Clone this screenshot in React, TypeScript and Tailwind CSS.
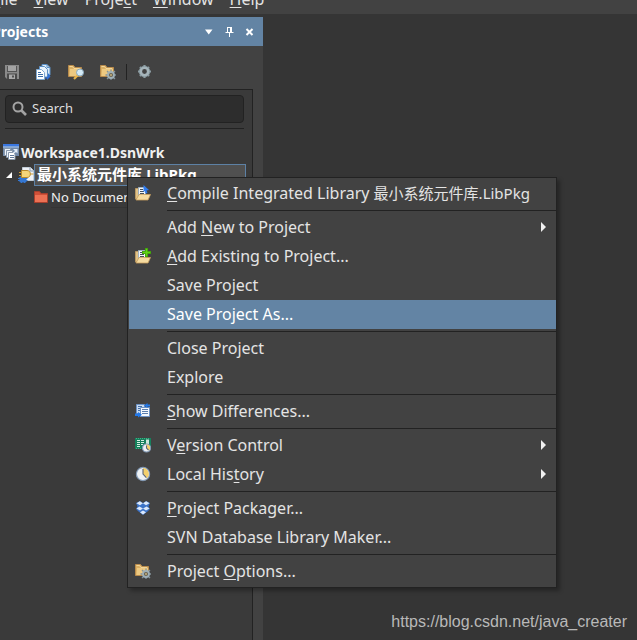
import type { ReactNode } from 'react';

type IconProps = { children: ReactNode; className?: string };

function Icon({ children, className = 'size-4 shrink-0' }: IconProps) {
  return (
    <svg viewBox="0 0 16 16" className={className} fill="none" aria-hidden="true">
      {children}
    </svg>
  );
}

function GearIcon() {
  return (
    <Icon>
      <path d="M7.500 1v13M1 7.500h13M3 3l9 9M12 3l-9 9" stroke="#8d9da3" strokeWidth="2.2" />
      <circle cx="7.500" cy="7.500" r="3.900" fill="#424242" stroke="#a5b4ba" strokeWidth="3" />
      <circle cx="7.500" cy="7.500" r="5.300" stroke="#81939b" strokeWidth="0.7" />
    </Icon>
  );
}

function SaveIcon() {
  return (
    <Icon>
      <path d="M1 1h14v14H3l-2-2z" fill="#8a8a8a" />
      <path d="M3 2h10v6H3z" fill="#555" />
      <path d="M4 2h8v5H4z" fill="#a3a3a3" />
      <path d="M3 9.500h10V15H3z" fill="#4b4b4b" />
      <path d="M5 10.500h6V15H5z" fill="#a9a9a9" />
      <path d="M8 11.500h2v2H8z" fill="#505050" />
    </Icon>
  );
}

function DocumentsIcon() {
  return (
    <Icon>
      <path d="M6 .5h5l3 3V11H6z" fill="#dcebf8" stroke="#5b8fc4" />
      <path d="M11 .5v3h3" stroke="#5b8fc4" />
      <path d="M3.500 2.500h5l3 3V13h-8z" fill="#e8f2fb" stroke="#5b8fc4" />
      <path d="M.5 5.500h5l3 3v7h-8z" fill="#fff" stroke="#7fa8d0" />
      <path d="M2 8.500h3M2 10.500h5M2 12.500h5" stroke="#3d6ea8" />
      <path d="M9 14.500h2V16l3.500-3.500L12 9v2.500c0 1.500-1 2-3 2z" fill="#2f6ed6" />
    </Icon>
  );
}

function FolderBase() {
  return (
    <>
      <path d="M.5 1.500h5l1.500 2h6.500v9H.5z" fill="#d9ae62" stroke="#b88b4c" />
      <path d="M2 5h11v7H1.500z" fill="#edc981" />
      <path d="M1.500 2.500h3l1.500 2h6" stroke="#f7e0a8" strokeWidth="0.8" />
    </>
  );
}

function FolderSearchIcon() {
  return (
    <Icon>
      <FolderBase />
      <path d="M10 11l-4 4" stroke="#e9b54b" strokeWidth="2.2" />
      <circle cx="12" cy="8.500" r="3.500" fill="#d4eaf6" stroke="#8ba9bc" />
    </Icon>
  );
}

function FolderGearIcon() {
  return (
    <Icon>
      <FolderBase />
      <path d="M11 5.500v10.500M5.500 11H16.500M7 7l8 8M15 7l-8 8" stroke="#83939a" strokeWidth="1.3" />
      <circle cx="11" cy="11" r="3" fill="#6b6350" stroke="#9fb0b8" strokeWidth="1.8" />
      <circle cx="11" cy="11" r="1" fill="#c6b27e" />
    </Icon>
  );
}

function OpenFolderBase() {
  return (
    <>
      <path d="M.5 3.500H4V14H.5z" fill="#e0c288" stroke="#b99862" />
      <path d="M3.500 2.500h6l1 1V11h-7z" fill="#f2f6fa" stroke="#9fb0c0" />
      <path d="M5 4.500h3M5 6.500h4M5 8.500h4" stroke="#45505c" />
      <path d="M1 15l3-5.500h11.500L13 15z" fill="#f5dba0" stroke="#c99f5d" strokeWidth="0.8" />
    </>
  );
}

function CompileIcon() {
  return (
    <Icon>
      <OpenFolderBase />
      <path d="M8.500 0L14 5l-2.500.5 1 2.500-2 .5-.5-2.500L8.500 7z" fill="#2f7cf0" />
    </Icon>
  );
}

function AddExistingIcon() {
  return (
    <Icon>
      <OpenFolderBase />
      <path d="M11.500 0v9M7 4.500h9" stroke="#3f9c0c" strokeWidth="3" />
      <path d="M11.500 .8v7.400M7.800 4.500h7.400" stroke="#62d417" strokeWidth="1.500" />
    </Icon>
  );
}

function DifferencesIcon() {
  return (
    <Icon>
      <path d="M1.500 1.500h8v9h-8z" fill="#c9dbf0" stroke="#6e93c4" />
      <path d="M3 3.500h4M3 5.500h3M3 7.500h3" stroke="#4670a8" />
      <path d="M5.500 4.500h9v9h-9z" fill="#f4f8fc" stroke="#6e93c4" />
      <path d="M7 6.500h6M7 8.500h6M7 10.500h6" stroke="#5b7eae" />
      <path d="M15 3.500h-2.500V5L9 2.500 12.500 0v1.500H15zM0 10.500h3V9l4 2.700L3 14.500V13H0z" fill="#2278e8" />
    </Icon>
  );
}

function ClockFace({ cx, cy, r }: { cx: number; cy: number; r: number }) {
  return (
    <>
      <circle cx={cx} cy={cy} r={r} fill="#eef2f5" stroke="#8299b5" strokeWidth="1.2" />
      <path
        d={`M${cx} ${cy}V${cy - r + 0.6}A${r - 0.6} ${r - 0.6} 0 0 1 ${cx + r * 0.6} ${cy + r * 0.65}z`}
        fill="#f3cf6b"
      />
      <path d={`M${cx} ${cy - r + 1.5}V${cy}l${r * 0.5} ${r * 0.55}`} stroke="#596579" strokeWidth="1.1" />
    </>
  );
}

function VersionIcon() {
  return (
    <Icon>
      <path d="M0 1h16v11H0z" fill="#16805c" />
      <path d="M1 1.500h14M1 11.500h8" stroke="#3fae84" strokeDasharray="1 1" />
      <path d="M2 3.500h3M2 5.500h3M2 7.500h3M2 9.500h3M6 3.500h3M6 5.500h3M6 7.500h2" stroke="#d8f0e5" />
      <path d="M11 2.500h3V7h-3z" fill="#cfe8dc" />
      <ClockFace cx={11.5} cy={11} r={4} />
    </Icon>
  );
}

function HistoryIcon() {
  return (
    <Icon>
      <ClockFace cx={8} cy={8} r={6.6} />
    </Icon>
  );
}

function PackagerIcon() {
  return (
    <Icon>
      <path d="M1 3l4-2 3 2 3-2 4 2-1.500 3.500L15 9l-2.500 2.500L8 15l-4.500-3.500L1 9l1.500-2.500z" fill="#3b73c8" />
      <path
        d="M4.800 1.200L8 3.200 5 5.200 1.500 3.200zM11.200 1.200L8 3.200l3 2 3.500-2zM4.500 6.500L8 8.500 5 10.500 1.500 8.500zM11.500 6.500L8 8.500l3 2 3.500-2zM8 10.500l3 1.800-3 2.200-3-2.200z"
        fill="#dce9fb"
      />
    </Icon>
  );
}

function WorkspaceIcon() {
  return (
    <Icon>
      <path d="M0 0h16v12H0z" fill="#6f88a8" />
      <path d="M0 0h16v2.500H0z" fill="#3b78e0" />
      <path d="M0 2.500h16v1H0z" fill="#a9c8f2" />
      <path d="M1.500 4.500h6v7h-6z" fill="#eef4fb" stroke="#8798ac" />
      <path d="M3.500 6.500h6v7h-6z" fill="#eef4fb" stroke="#8798ac" />
      <path d="M5.500 8.500h5l1.500 1.500v5.500H5.500z" fill="#fff" stroke="#8798ac" />
      <path d="M7 11.500h4M7 13.500h4" stroke="#5e7899" />
      <path d="M10 5h4.500v4.500l-1.500-1.500-2 1.500-1-1 2-1.500z" fill="#e3edf8" />
    </Icon>
  );
}

function LibraryIcon() {
  return (
    <Icon>
      <path d="M4.500.5h8l3 3v10h-11z" fill="#eef2f7" stroke="#c3ced9" />
      <path d="M12 .5v3.500h3.500" stroke="#8497ac" />
      <path d="M2 10h6v5H2zM0 11.500h9.500M0 13.500h9.500M3.500 9v7M6.500 9v7" fill="#3477d2" stroke="#3477d2" />
      <path d="M3.500 3.500H9c4.500 0 4.500 7 0 7H3.500z" fill="#f5d67a" stroke="#b98a2a" />
      <path d="M1 5.500h2M1 8.500h2M13 7h2.500" stroke="#c99a35" />
    </Icon>
  );
}

function RedFolderIcon() {
  return (
    <svg viewBox="0 0 14 12" className="h-3 w-3.5 shrink-0" fill="none" aria-hidden="true">
      <path d="M.5.5h5l1.500 2h6.500v9H.5z" fill="#cf5038" stroke="#a83f2d" />
      <path d="M1 4h12v7H1z" fill="#ec7154" />
    </svg>
  );
}

function TitleBar() {
  return (
    <div className="flex h-[29px] items-center bg-[#6384a4] pr-2 text-white">
      <h2 className="-ml-2 flex-1 text-[14px] leading-5 font-bold">Projects</h2>
      <div className="flex gap-2">
        <button type="button" aria-label="Panel menu" className="size-3">
          <svg viewBox="0 0 12 12" className="size-3" aria-hidden="true">
            <path d="M2 3.500h7.500L5.750 8.500z" fill="#fff" />
          </svg>
        </button>
        <button type="button" aria-label="Pin panel" className="size-3">
          <svg viewBox="0 0 12 12" className="size-3" fill="none" aria-hidden="true">
            <path d="M4.500 1v5M4 1.500h5M2.500 6.500h8M6.500 7v4" stroke="#fff" />
            <path d="M7 1h2v5H7z" fill="#fff" />
          </svg>
        </button>
        <button type="button" aria-label="Close panel" className="size-3">
          <svg viewBox="0 0 12 12" className="size-3" fill="none" aria-hidden="true">
            <path d="M3.500 3l6 6M9.500 3l-6 6" stroke="#fff" strokeWidth="2" />
          </svg>
        </button>
      </div>
    </div>
  );
}

function Toolbar() {
  return (
    <div className="flex h-[43px] items-center gap-4 pt-2 pl-1">
      <button type="button" aria-label="Save"><SaveIcon /></button>
      <button type="button" aria-label="Documents"><DocumentsIcon /></button>
      <button type="button" aria-label="Find in project"><FolderSearchIcon /></button>
      <button type="button" aria-label="Project options"><FolderGearIcon /></button>
      <div className="flex items-center gap-2.5">
        <span className="-ml-1.5 h-4 w-px bg-[#222]" />
        <button type="button" aria-label="Settings"><GearIcon /></button>
      </div>
    </div>
  );
}

function ProjectTree() {
  return (
    <ul className="mt-3.5 text-[#f0f0f0]">
      <li className="flex h-5 items-center gap-0.5 pb-0.5 pl-[3px] text-[14px] font-bold">
        <WorkspaceIcon />
        Workspace1.DsnWrk
      </li>
      <li className="flex h-[23px] items-center pl-1.5">
        <svg viewBox="0 0 6 6" className="mr-1.5 size-1.5" aria-hidden="true">
          <path d="M6 0v6H0z" fill="#fff" />
        </svg>
        <LibraryIcon />
        <span className="mr-1.5 h-[22px] flex-1 border border-[#5d81a5] bg-[#505050] pl-0.5 text-[15px] leading-[18px] font-bold whitespace-nowrap text-white">
          最小系统元件库.LibPkg
        </span>
      </li>
      <li className="flex h-[22px] items-center gap-[3px] pl-[34px] text-[13px] leading-5">
        <RedFolderIcon />
        <span className="flex-1 border-b border-[#343434] whitespace-nowrap">No Documents Added</span>
      </li>
    </ul>
  );
}

function ProjectsPanel() {
  return (
    <aside className="flex w-[263px] flex-col bg-[#424242]">
      <TitleBar />
      <Toolbar />
      <div className="mr-2.5 flex-1 border-t border-r border-[#222] bg-[#3a3a3a]">
        <div className="mx-[5px] mr-2 border-b border-[#222] pt-[5px] pb-[5px]">
          <label className="flex h-7 items-center gap-1 rounded border border-[#222] bg-[#2d2d2d] px-1.5">
            <svg viewBox="0 0 16 16" className="size-4" fill="none" aria-hidden="true">
              <circle cx="6" cy="6" r="4.500" stroke="#a3a3a3" strokeWidth="2" />
              <path d="M9.500 9.500l4.500 4.500" stroke="#a3a3a3" strokeWidth="2.600" />
            </svg>
            <input
              type="text"
              aria-label="Search"
              placeholder="Search"
              className="min-w-0 flex-1 bg-transparent pb-0.5 text-[13px] leading-5 outline-none placeholder:text-[#dedede]"
            />
          </label>
        </div>
        <ProjectTree />
      </div>
    </aside>
  );
}

function Key({ children }: { children: string }) {
  return <span className="underline decoration-1 underline-offset-2">{children}</span>;
}

type ItemProps = { icon?: ReactNode; active?: boolean; submenu?: boolean; children: ReactNode };

function MenuItem({ icon, active, submenu, children }: ItemProps) {
  return (
    <button
      type="button"
      role="menuitem"
      aria-haspopup={submenu ? 'menu' : undefined}
      className={
        active
          ? 'flex h-[29px] w-full items-center pr-2.5 pb-0.5 pl-1.5 text-left bg-[#6384a4] text-white'
          : 'flex h-[29px] w-full items-center pr-2.5 pb-0.5 pl-1.5 text-left'
      }
    >
      <span className="mr-4 size-4 shrink-0">{icon}</span>
      <span className="flex-1 whitespace-nowrap">{children}</span>
      {submenu && (
        <svg viewBox="0 0 5 10" className="h-2.5 w-[5px]" aria-hidden="true">
          <path d="M0 0l5 5-5 5z" fill="#f0f0f0" />
        </svg>
      )}
    </button>
  );
}

function Separator() {
  return <div role="separator" className="my-0.5 ml-[38px] h-px bg-[#222]" />;
}

function ContextMenu() {
  return (
    <div
      role="menu"
      className="absolute top-[177px] left-[127px] w-[430px] border border-[#222] bg-[#424242] py-px pl-px text-[16px] leading-5 text-[#e4e4e4] shadow-[3px_3px_4px_rgba(0,0,0,0.3)]"
    >
      <MenuItem icon={<CompileIcon />}>
        <Key>C</Key>ompile Integrated Library <span className="text-[15px]">最小系统元件库.LibPkg</span>
      </MenuItem>
      <Separator />
      <MenuItem submenu>Add <Key>N</Key>ew to Project</MenuItem>
      <MenuItem icon={<AddExistingIcon />}><Key>A</Key>dd Existing to Project...</MenuItem>
      <MenuItem>Save Project</MenuItem>
      <MenuItem active>Save Project As...</MenuItem>
      <Separator />
      <MenuItem>Close Project</MenuItem>
      <MenuItem>Explore</MenuItem>
      <Separator />
      <MenuItem icon={<DifferencesIcon />}><Key>S</Key>how Differences...</MenuItem>
      <Separator />
      <MenuItem icon={<VersionIcon />} submenu>V<Key>e</Key>rsion Control</MenuItem>
      <MenuItem icon={<HistoryIcon />} submenu>Local His<Key>t</Key>ory</MenuItem>
      <Separator />
      <MenuItem icon={<PackagerIcon />}><Key>P</Key>roject Packager...</MenuItem>
      <MenuItem>SVN Database Library Maker...</MenuItem>
      <Separator />
      <MenuItem icon={<FolderGearIcon />}>Project <Key>O</Key>ptions...</MenuItem>
    </div>
  );
}

export default function App() {
  return (
    <div className="relative flex min-h-screen flex-col overflow-hidden bg-[#353535] font-['Noto_Sans','Noto_Sans_CJK_SC',sans-serif]">
      <nav className="flex h-3.5 items-end gap-4 overflow-hidden bg-[#424242] pb-[5px] text-[16px] leading-5 text-[#e4e4e4]">
        <button type="button" className="-ml-2"><Key>F</Key>ile</button>
        <button type="button"><Key>V</Key>iew</button>
        <button type="button">Proje<Key>c</Key>t</button>
        <button type="button"><Key>W</Key>indow</button>
        <button type="button"><Key>H</Key>elp</button>
      </nav>
      <main className="mt-[3px] flex flex-1">
        <ProjectsPanel />
        <section className="flex flex-1 items-end justify-end pr-2.5 pb-2">
          <a
            href="https://blog.csdn.net/java_creater"
            className="font-['Liberation_Sans',sans-serif] text-[16px] leading-5 text-[#b9b9b9]"
          >
            https://blog.csdn.net/java_creater
          </a>
        </section>
      </main>
      <ContextMenu />
    </div>
  );
}
